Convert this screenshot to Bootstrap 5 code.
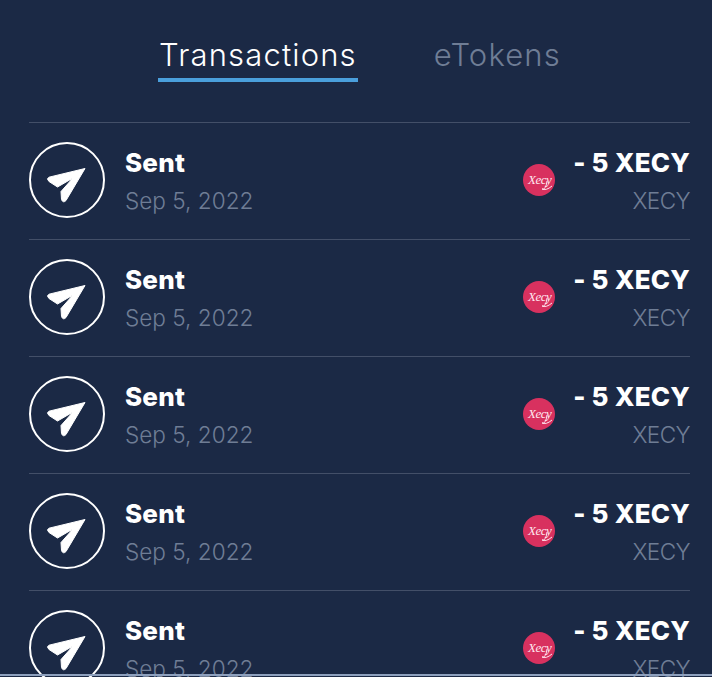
<!DOCTYPE html>
<html lang="en">
<head>
    <meta charset="UTF-8">
    <meta name="viewport" content="width=device-width, initial-scale=1.0">
    <title>Transactions</title>
    <link href="https://cdn.jsdelivr.net/npm/bootstrap@5.3.0/dist/css/bootstrap.min.css" rel="stylesheet">
    <style>
        html, body { height: 100%; overflow: hidden; }
        body { background: #1b2945; font-family: "Inter", "Liberation Sans", sans-serif; color: #fff; position: relative; }
        .tabs-bar { height: 122px; padding-top: 33px; padding-left: 7px; gap: 76px; }
        .tab-link { font-size: 31px; line-height: 44px; height: 49px; color: #6f7d95; font-weight: 300; letter-spacing: 1.15px; text-decoration: none; }
        .tab-link.current { color: #fff; border-bottom: 4px solid #4a9fdc; padding: 0 1px; }
        .tx-list { padding: 0 22px 0 29px; }
        .tx-row { height: 117px; border-top: 1px solid #434f68; padding-top: 19px; }
        .tx-icon { width: 76px; height: 76px; border: 2px solid #fff; border-radius: 50%; flex: none; margin-right: 20px; }
        .tx-title { font-size: 26px; font-weight: 800; line-height: 38px; margin-top: 2px; letter-spacing: .2px; }
        .tx-sub { font-size: 22.6px; font-weight: 300; line-height: 38px; color: #6f7d95; }
        .tx-sub.ticker { letter-spacing: -.6px; }
        .tx-coin { width: 32px; height: 32px; margin: 22px 18px 0 0; flex: none; }
        .coin-label { font-family: "Liberation Serif", serif; font-style: italic; font-size: 13px; letter-spacing: -.5px; fill: #ffe6ee; }
        .bottom-edge { position: absolute; left: 0; right: 0; bottom: 1px; height: 2px; background: #8ea0bd; }
    </style>
</head>
<body>
    <div class="tabs-bar d-flex justify-content-center">
        <a class="tab-link current" href="#">Transactions</a>
        <a class="tab-link" href="#">eTokens</a>
    </div>

    <div class="tx-list" id="txList"></div>
    <div class="bottom-edge"></div>

    <script src="https://cdn.jsdelivr.net/npm/bootstrap@5.3.0/dist/js/bootstrap.bundle.min.js"></script>
    <script>
        const list = document.getElementById("txList");
        for (let i = 0; i < 5; i++) {
            list.innerHTML += `
                <div class="tx-row d-flex">
                    <svg class="tx-icon" viewBox="0 0 72 72">
                        <path d="M54 24.500 18 33.200Q15 34.500 18 37.500L26.500 43 42 34 30 47.500 30.500 55.500Q32 59.500 35 56.500Z" fill="#fff" stroke="#fff" stroke-width="1" stroke-linejoin="round"/>
                    </svg>
                    <div class="flex-grow-1">
                        <div class="tx-title">Sent</div>
                        <div class="tx-sub">Sep 5, 2022</div>
                    </div>
                    <svg class="tx-coin" viewBox="0 0 32 32">
                        <circle cx="16" cy="16" r="16" fill="#d8315f"/>
                        <text class="coin-label" x="5" y="20">Xecy</text>
                        <path d="M24 17Q23 26 19 25Q23 27 29 22" fill="none" stroke="#ffe6ee" stroke-width="1"/>
                    </svg>
                    <div class="text-end">
                        <div class="tx-title">- 5 XECY</div>
                        <div class="tx-sub ticker">XECY</div>
                    </div>
                </div>`;
        }
    </script>
</body>
</html>
